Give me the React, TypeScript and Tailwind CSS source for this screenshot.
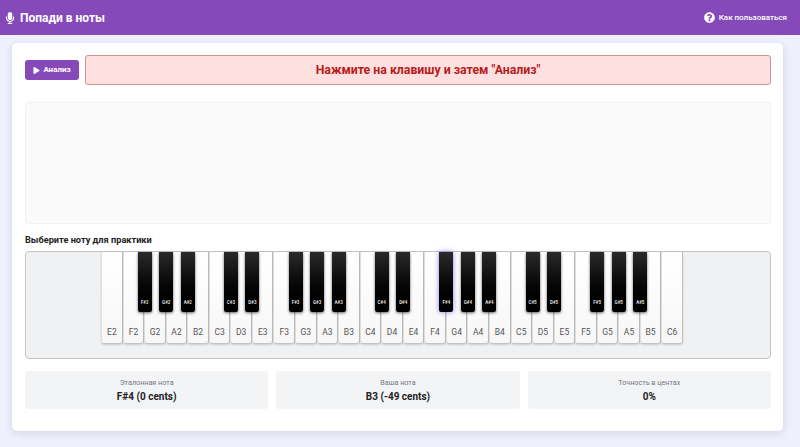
import { FaMicrophone, FaPlay, FaQuestionCircle } from "react-icons/fa";

const whiteKeys = [
  "E2", "F2", "G2", "A2", "B2", "C3", "D3", "E3", "F3", "G3", "A3", "B3", "C4", "D4",
  "E4", "F4", "G4", "A4", "B4", "C5", "D5", "E5", "F5", "G5", "A5", "B5", "C6",
];

const hasSharp = (note: string) => ["C", "D", "F", "G", "A"].includes(note[0]) && note !== "C6";

const stats = [
  { label: "Эталонная нота", value: "F#4 (0 cents)" },
  { label: "Ваша нота", value: "B3 (-49 cents)" },
  { label: "Точность в центах", value: "0%" },
];

const App = () => {
  return (
    <div className="h-[447px] overflow-hidden bg-[#eef1fd] font-['Roboto',sans-serif]">
      {/* Header */}
      <header className="flex h-[35px] items-center justify-between bg-[#8549ba] pl-[5px] pr-[13px] text-white">
        <div className="flex items-center gap-[5px]">
          <FaMicrophone className="h-[12px] w-[10px]" />
          <h1 className="text-[12px] font-bold">Попади в ноты</h1>
        </div>
        <div className="flex items-center gap-[4px] text-[8px] font-medium">
          <FaQuestionCircle className="-ml-[1px] h-[11px] w-[11px]" />
          <span>Как пользоваться</span>
        </div>
      </header>

      {/* Card */}
      <main className="mx-[12px] mt-[8px] flex h-[388px] w-[771px] flex-col rounded-[5px] bg-white pt-[12px] pr-[12px] pl-[13px] shadow-[0_2px_8px_rgba(0,0,0,0.12)]">
        <div className="flex items-center gap-[6px]">
          <button className="flex h-[20px] w-[54px] items-center justify-center gap-[3px] rounded-[3px] bg-[#8549ba] text-[8px] font-bold text-white">
            <FaPlay className="h-[7px] w-[7px]" />
            Анализ
          </button>
          <div className="flex h-[30px] flex-1 items-center justify-center rounded-[3px] border border-[#d39393] bg-[#ffe0e0] text-[12.3px] font-bold text-[#b71c1c]">
            Нажмите на клавишу и затем "Анализ"
          </div>
        </div>

        <div className="mt-[17px] h-[122px] rounded-[3px] border border-[#f2f2f4] bg-[#fafafa]" />

        <h2 className="mt-[10px] text-[9.2px] leading-[12px] font-bold text-[#222]">Выберите ноту для практики</h2>

        {/* Keyboard */}
        <div className="mt-[5px] flex h-[108px] justify-center rounded-[4px] border border-[#c4c4c4] bg-[#f0f1f3] pr-[12px]">
          {whiteKeys.map((note) => (
            <div
              key={note}
              className="relative flex h-[92px] w-[21.55px] items-end justify-center rounded-b-[3px] border-x border-b border-r-[#c0c0c0] border-b-[#c4c4c4] border-l-[#dedede] bg-gradient-to-b from-white to-[#f7f7f7] pb-[6px] text-[8.5px] leading-[10px] text-[#555] shadow-[0_1px_2px_rgba(0,0,0,0.15)]"
            >
              {note}
              {hasSharp(note) && (
                <div
                  className={`absolute top-0 -right-[8.5px] z-10 flex h-[60px] w-[14px] items-end justify-center rounded-b-[2px] bg-gradient-to-b from-[#2a2a2a] to-black pb-[6px] text-[4.5px] leading-[6px] font-bold text-[#ddd] ${
                    note === "F4"
                      ? "shadow-[0_0_5px_rgba(90,70,230,0.7)]"
                      : "shadow-[0_1px_3px_rgba(0,0,0,0.6)]"
                  }`}
                >
                  {note[0]}#{note[1]}
                </div>
              )}
            </div>
          ))}
        </div>

        {/* Stats */}
        <div className="mt-[12px] grid grid-cols-3 gap-[8px]">
          {stats.map((stat) => (
            <div key={stat.label} className="flex h-[38px] flex-col items-center justify-center rounded-[3px] bg-[#f3f4f6]">
              <span className="text-[7.2px] leading-[11px] text-[#777]">{stat.label}</span>
              <span className="mt-[2px] text-[10px] leading-[13px] font-bold text-[#222]">{stat.value}</span>
            </div>
          ))}
        </div>
      </main>
    </div>
  );
};

export default App;
